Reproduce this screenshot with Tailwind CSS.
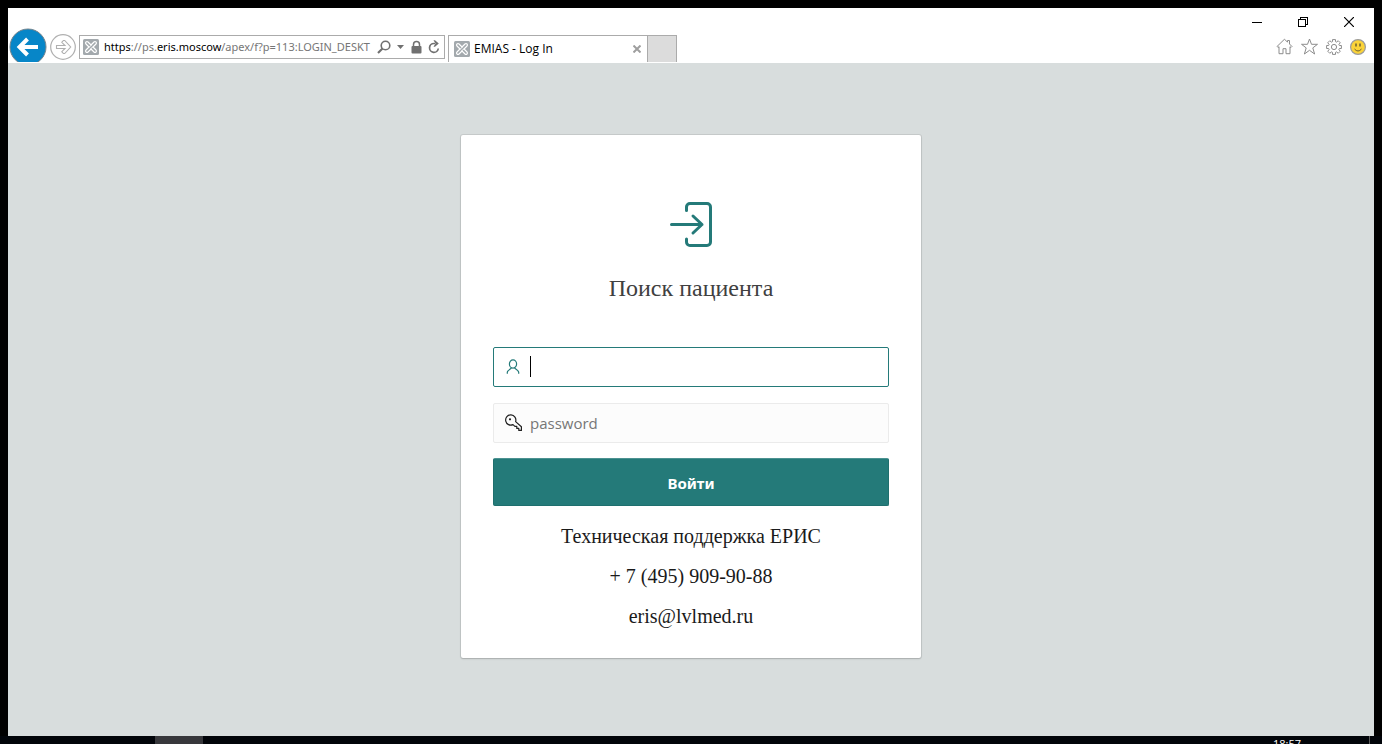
<!DOCTYPE html>
<html lang="ru">
<head>
<meta charset="utf-8">
<meta name="viewport" content="width=device-width, initial-scale=1">
<title>EMIAS - Log In</title>
<script src="https://cdn.jsdelivr.net/npm/@tailwindcss/browser@4"></script>
</head>
<body class="flex h-screen flex-col overflow-hidden bg-black font-['Open_Sans','Noto_Sans',sans-serif]">
<svg class="hidden" aria-hidden="true">
  <symbol id="favicon" viewBox="0 0 16 16">
    <rect width="16" height="16" rx="1.5" fill="#a3a9ad"/>
    <path d="M4 4l8 8M12 4l-8 8" stroke="#fff" stroke-width="4" stroke-linecap="round"/>
    <path d="M4 4l8 8M12 4l-8 8" stroke="#a3a9ad" stroke-width="1.7" stroke-linecap="round"/>
    <path d="M6 8.4L8.4 6M7.6 10L10 7.6" stroke="#fff" stroke-width="1"/>
  </symbol>
</svg>

<div class="mx-2 mt-2 flex min-h-0 flex-1 flex-col bg-white">
  <header class="flex h-[55px] shrink-0 justify-between overflow-hidden">
    <div class="flex h-[54px] min-w-0 items-start gap-[3px] overflow-hidden pt-5 pl-px">
      <button class="shrink-0" aria-label="Назад">
        <svg width="38" height="38" viewBox="0 0 38 38" fill="none">
          <circle cx="19" cy="19" r="18" fill="#0786c8" stroke="#77848c"/>
          <path d="M29 19H12M18.500 11L10.500 19l8 8" stroke="#fff" stroke-width="4"/>
        </svg>
      </button>
      <button class="mt-1.5 shrink-0" aria-label="Вперёд">
        <svg width="26" height="26" viewBox="0 0 26 26" fill="none" stroke="#b0b0b0">
          <circle cx="13" cy="13" r="12.300" stroke-width="1.200"/>
          <path d="M6.500 11.500h8.500l-3.200-3.200 1.600-1.800h1.300l6 6.500-6 6.500h-1.300l-1.600-1.800 3.200-3.200H6.500z" stroke-width="1.100"/>
        </svg>
      </button>
      <div class="mt-[7px] flex h-6 w-[366px] shrink-0 items-center border border-[#ababab] pr-1 pl-[3px]">
        <svg class="shrink-0" width="16" height="16"><use href="#favicon"/></svg>
        <div class="ml-[5px] w-[269px] overflow-hidden font-['Noto_Sans',sans-serif] text-[11px] leading-5 whitespace-nowrap text-[#767676]"><span class="text-black">https</span>://ps.<span class="text-black">eris.moscow</span>/apex/f?p=113:LOGIN_DESKT</div>
        <div class="ml-1 flex flex-1 items-center justify-between text-[#707070]">
          <button aria-label="Поиск"><svg width="14" height="14" viewBox="0 0 14 14" fill="none" stroke="currentColor"><circle cx="8.500" cy="5.500" r="4.300" stroke-width="1.600"/><path d="M5.500 8.500L1 13" stroke-width="2.200"/></svg></button>
          <button aria-label="Список"><svg width="7" height="4" viewBox="0 0 7 4"><path d="M0 0h7L3.500 4z" fill="currentColor"/></svg></button>
          <svg width="11" height="14" viewBox="0 0 11 14"><rect x="0.500" y="6" width="10" height="7.500" rx="1" fill="currentColor"/><path d="M2.500 7V4.500a3 3 0 016 0V7" fill="none" stroke="currentColor" stroke-width="1.500"/></svg>
          <button aria-label="Обновить"><svg width="12" height="14" viewBox="0 0 12 14" fill="none"><path d="M10.300 8.500a4.400 4.400 0 11-4.300-5h1" stroke="currentColor" stroke-width="1.700"/><path d="M5.500 0.300h1.500l3.800 3.300-3.800 3.200H5.500l2-3.200z" fill="currentColor"/></svg></button>
        </div>
      </div>
      <div class="mt-[7px] flex h-[27px] shrink-0">
        <div class="flex w-[200px] items-center border border-b-0 border-[#ababab] pr-1.5 pl-[5px]">
          <svg width="16" height="16"><use href="#favicon"/></svg>
          <span class="ml-1 flex-1 text-[12px] leading-5 text-black">EMIAS - Log In</span>
          <button aria-label="Закрыть вкладку"><svg width="8" height="8" viewBox="0 0 8 8"><path d="M0.500 0.500l7 7M7.500 0.500l-7 7" stroke="#9f9f9f" stroke-width="2"/></svg></button>
        </div>
        <button class="w-[29px] border-t border-r border-[#ababab] bg-[#dcdcdc]" aria-label="Новая вкладка"></button>
      </div>
    </div>

    <div class="flex shrink-0 flex-col">
      <div class="flex h-7 items-center justify-end gap-9 pr-5">
        <button aria-label="Свернуть"><svg width="10" height="10" viewBox="0 0 10 10" shape-rendering="crispEdges"><path d="M0 5.500h10" stroke="#000"/></svg></button>
        <button aria-label="Восстановить"><svg width="10" height="10" viewBox="0 0 10 10" fill="none" stroke="#000" shape-rendering="crispEdges"><path d="M.5 2.500h7v7h-7zM2.500 2.500v-2h7v7h-2"/></svg></button>
        <button aria-label="Закрыть"><svg width="10" height="10" viewBox="0 0 10 10"><path d="M0 0l10 10M10 0L0 10" stroke="#000" stroke-width="1.200"/></svg></button>
      </div>
      <div class="flex h-[21px] items-center justify-end gap-2 pr-2">
        <button aria-label="Домой"><svg width="17" height="17" viewBox="0 0 17 17" fill="none" stroke="#8c8c8c"><path d="M8.500 1.200L1 8.500l1 1 1-.8v7h4v-5h3v5h4v-7l1 .8 1-1-2.500-2.500V2.500h-2v1.700z" stroke-linejoin="round"/></svg></button>
        <button aria-label="Избранное"><svg width="17" height="17" viewBox="0 0 17 17" fill="none" stroke="#8c8c8c"><path d="M8.500 1l2 5.300h6l-4.700 3.600 1.800 6.100-5.100-3.700L3.400 16l1.800-6.100L.5 6.300h6z" stroke-linejoin="round"/></svg></button>
        <button aria-label="Сервис"><svg width="16" height="16" viewBox="0 0 16 16" fill="none" stroke="#8c8c8c"><circle cx="8" cy="8" r="2.600"/><path d="M6.500.6h3v2l1.200.5 1.500-1.400 2.100 2.100-1.400 1.500.5 1.200h2v3h-2l-.5 1.200 1.400 1.500-2.100 2.100-1.500-1.400-1.200.5v2h-3v-2l-1.200-.5-1.500 1.400-2.100-2.100 1.400-1.500-.5-1.200h-2v-3h2l.5-1.200-1.400-1.500 2.100-2.100 1.500 1.400 1.200-.5z" stroke-linejoin="round"/></svg></button>
        <button aria-label="Отзыв"><svg width="16" height="16" viewBox="0 0 16 16" fill="none"><circle cx="8" cy="8" r="7.400" fill="#fbd338" stroke="#9b9b9b" stroke-width="1.200"/><path d="M6 4.500v3M10 4.500v3" stroke="#6b6030" stroke-width="1.500"/><path d="M4.500 10q3.500 4 7 0" stroke="#6b6030"/></svg></button>
      </div>
    </div>
  </header>

  <main class="flex min-h-0 flex-1 items-start justify-center bg-[#d8dddd] px-4 pt-[72px]">
    <form class="w-full max-w-[460px] rounded-xs bg-white px-8 pt-16 pb-[30px] shadow-[0_0_0_1px_rgba(0,0,0,0.08),0_1px_2px_rgba(0,0,0,0.16)]">
      <svg class="mx-auto" width="48" height="48" viewBox="0 0 48 48" fill="none" stroke="#247a79" stroke-width="3" stroke-linecap="round" stroke-linejoin="round">
        <path d="M19.500 11.500V8a3.500 3.500 0 013.500-3.500h17A3.500 3.500 0 0143.500 8v35a3.500 3.500 0 01-3.500 3.500H23a3.500 3.500 0 01-3.500-3.500V40"/>
        <path d="M4.500 25.500H35M26 17l9 8.500L26 34"/>
      </svg>
      <h1 class="mt-[25px] text-center font-['Liberation_Serif',serif] text-[24px] leading-8 text-[#404040]">Поиск пациента</h1>

      <div class="relative mt-[43px]">
        <label for="user" class="absolute top-3 left-3 text-[#247a79]" aria-label="Имя пользователя">
          <svg width="16" height="16" viewBox="0 0 16 16" fill="none" stroke="currentColor" stroke-width="1.200"><ellipse cx="8" cy="5" rx="3.600" ry="4.200"/><path d="M2.300 14.800v-1.500C2.300 11.600 5 10.200 6.600 9M13.700 14.800v-1.500c0-1.700-2.700-3.100-4.300-4.300"/></svg>
        </label>
        <input id="user" type="text" class="block h-10 w-full rounded-xs border border-[#247a79] bg-white pr-3 pl-9 text-[16px] caret-transparent outline-none">
        <span class="absolute top-[9px] left-[37px] h-[21px] w-px bg-black"></span>
      </div>
      <div class="relative mt-4">
        <label for="pass" class="absolute top-[11px] left-3 text-[#202020]" aria-label="Пароль">
          <svg width="17" height="17" viewBox="0 0 17 17" fill="none" stroke="currentColor" stroke-width="1.200" stroke-linejoin="round"><path d="M10.600 7.600l5.800 5.200v3.600h-2.600v-2h-2v-2h-1.900L8 10.600A5.100 5.100 0 1110.600 7.600z"/><circle cx="5" cy="5.300" r=".5"/></svg>
        </label>
        <input id="pass" type="password" placeholder="password" class="block h-10 w-full rounded-xs border border-[#ebebeb] bg-[#fcfcfc] pr-3 pl-9 text-[15px] placeholder:text-[#767676] outline-none">
      </div>
      <button type="submit" class="mt-[15px] block h-12 w-full rounded-xs border border-[#1f6f6e] border-t-[#4c9291] bg-[#247a79] pt-0.5 font-['Noto_Sans',sans-serif] text-[15px] leading-6 font-bold text-white">Войти</button>
      <div class="mt-[18px] flex flex-col gap-4 text-center font-['Liberation_Serif',serif] text-[20px] leading-6 text-[#1a1a1a]">
        <p>Техническая поддержка ЕРИС</p>
        <p>+ 7 (495) 909-90-88</p>
        <p>eris@lvlmed.ru</p>
      </div>
    </form>
  </main>
</div>

<footer class="flex h-2 shrink-0 overflow-hidden bg-[#010409] pr-3 pl-[155px]">
  <div class="h-2 w-12 bg-[#37373b]"></div>
  <time class="ml-auto pr-[68px] text-[11px] leading-4 text-white">18:57</time>
  <div class="h-2 w-px bg-[#5a5a5a]"></div>
</footer>
</body>
</html>
